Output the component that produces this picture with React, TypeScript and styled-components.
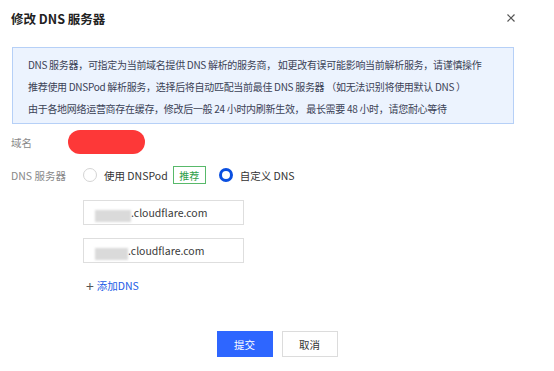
import React from 'react';
import styled, { createGlobalStyle } from 'styled-components';

const Global = createGlobalStyle`
  html, body { margin: 0; padding: 0; background: #fff; }
  body { font-family: "Noto Sans CJK SC", "Noto Sans", "Liberation Sans", sans-serif; color: #333; }
`;

const Dialog = styled.div`
  width: 554px;
  height: 371px;
  box-sizing: border-box;
  padding: 0 40px 0 11px;
  display: flex;
  flex-direction: column;
`;

const Header = styled.div`
  height: 36px;
  display: flex;
  align-items: center;
  justify-content: space-between;
  margin-right: -2px;
`;

const Title = styled.div`
  font-size: 12.5px;
  font-weight: 700;
  color: #222;
`;

const Close = styled.div`
  width: 10px;
  height: 10px;
  color: #555;
  display: flex;
`;

const Notice = styled.div`
  margin: 11px 0 0 1px;
  height: 77px;
  box-sizing: border-box;
  background: #ecf3fe;
  border: 1px solid #b6d0f7;
  padding: 6px 0 0 15px;
  font-size: 10px;
  line-height: 22px;
  color: #3b4256;
  letter-spacing: -0.3px;
`;

const Row = styled.div<{ $h: number }>`
  display: flex;
  align-items: center;
  height: ${p => p.$h}px;
`;

const Label = styled.div`
  width: 57px;
  font-size: 10.5px;
  color: #888;
  flex-shrink: 0;
`;

const Redact = styled.div`
  width: 77px;
  height: 24px;
  border-radius: 12px;
  background: #fd3838;
`;

const RadioGroup = styled.div`
  display: flex;
  align-items: center;
  margin-left: 15px;
  font-size: 10.5px;
  color: #333;
`;

const RadioItem = styled.label`
  display: flex;
  align-items: center;
  margin-right: 13px;
`;

const Dot = styled.span<{ $on?: boolean }>`
  width: 14px;
  height: 14px;
  box-sizing: border-box;
  border-radius: 50%;
  border: ${p => (p.$on ? '3.5px solid #0a4fe0' : '1px solid #d4d4d4')};
  margin-right: 7px;
  background: #fff;
`;

const Tag = styled.span`
  margin-left: 5px;
  height: 18px;
  width: 33px;
  box-sizing: border-box;
  border: 1px solid #58b96a;
  color: #2f9e48;
  font-size: 10px;
  display: flex;
  align-items: center;
  justify-content: center;
`;

const Fields = styled.div`
  margin-left: 72px;
  display: flex;
  flex-direction: column;
  gap: 13px;
  margin-top: 10px;
`;

const Input = styled.div`
  width: 161px;
  height: 25px;
  box-sizing: border-box;
  border: 1px solid #dedede;
  display: flex;
  align-items: center;
  padding-left: 11px;
  font-size: 10.5px;
  color: #3a3a3a;
`;

const Blur = styled.span<{ $w: number }>`
  width: ${p => p.$w}px;
  height: 12px;
  margin-top: 6px;
  background: #dadada;
  filter: blur(1px);
`;

const AddLink = styled.div`
  margin: 15px 0 0 75px;
  display: flex;
  align-items: center;
  font-size: 10.5px;
  color: #1d5ce6;
  gap: 3px;
`;

const Plus = styled.span`
  color: #555;
  font-size: 14px;
  line-height: 1;
`;

const Footer = styled.div`
  display: flex;
  justify-content: center;
  gap: 9px;
  margin: 38px 0 0 29px;
`;

const Button = styled.button<{ $primary?: boolean }>`
  width: 56px;
  height: 26px;
  font-family: inherit;
  font-size: 10.5px;
  border: 1px solid ${p => (p.$primary ? '#2e66ff' : '#dcdcdc')};
  background: ${p => (p.$primary ? '#2e66ff' : '#fff')};
  color: ${p => (p.$primary ? '#fff' : '#333')};
  padding: 0;
`;

export default function App() {
  return (
    <Dialog>
      <Global />
      <Header>
        <Title>修改 DNS 服务器</Title>
        <Close>
          <svg width="10" height="10" viewBox="0 0 10 10">
            <path d="M1.5 1.5 L8.5 8.5 M8.5 1.5 L1.5 8.5" stroke="currentColor" strokeWidth="1.2" />
          </svg>
        </Close>
      </Header>
      <Notice>
        <div>DNS 服务器，可指定为当前域名提供 DNS 解析的服务商， 如更改有误可能影响当前解析服务，请谨慎操作</div>
        <div>推荐使用 DNSPod 解析服务，选择后将自动匹配当前最佳 DNS 服务器 （如无法识别将使用默认 DNS ）</div>
        <div>由于各地网络运营商存在缓存，修改后一般 24 小时内刷新生效， 最长需要 48 小时，请您耐心等待</div>
      </Notice>
      <Row $h={36}>
        <Label>域名</Label>
        <Redact />
      </Row>
      <Row $h={30}>
        <Label>DNS 服务器</Label>
        <RadioGroup>
          <RadioItem>
            <Dot />
            使用 DNSPod
            <Tag>推荐</Tag>
          </RadioItem>
          <RadioItem>
            <Dot $on />
            自定义 DNS
          </RadioItem>
        </RadioGroup>
      </Row>
      <Fields>
        <Input>
          <Blur $w={36} />
          .cloudflare.com
        </Input>
        <Input>
          <Blur $w={33} />
          .cloudflare.com
        </Input>
      </Fields>
      <AddLink>
        <Plus>+</Plus>添加DNS
      </AddLink>
      <Footer>
        <Button $primary>提交</Button>
        <Button>取消</Button>
      </Footer>
    </Dialog>
  );
}
